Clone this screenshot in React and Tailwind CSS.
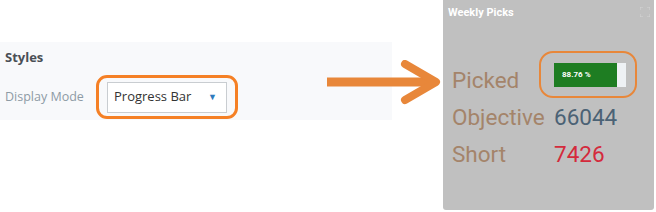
export default function App() {
    return (
        <div className="relative w-[656px] h-[212px] bg-white overflow-hidden" style={{ fontFamily: "'Open Sans', sans-serif" }}>
            <div className="absolute left-0 top-[42px] w-[392px] h-[78px] bg-[#f8f9fb]">
                <div className="pl-[5px] pt-[6px] text-[13px] font-bold text-[#4a4f55]">Styles</div>
                <div className="flex items-center mt-[14px]">
                    <span className="pl-[5px] w-[107px] text-[12.5px] text-[#8e9ba5]">Display Mode</span>
                    <div className="relative">
                        <div className="flex items-center justify-between w-[120px] h-[31px] bg-white border border-[#c9cdd1] pl-[6px] pr-[9px] text-[13px] text-[#333]">
                            <span>Progress Bar</span>
                            <span className="text-[9px] text-[#2f7bbd]">▼</span>
                        </div>
                        <div className="absolute -left-[11px] -top-[7px] w-[142px] h-[44px] border-[3px] border-[#f58025] rounded-[11px]"></div>
                    </div>
                </div>
            </div>

            <svg className="absolute left-[325px] top-[60px]" width="118" height="46" viewBox="0 0 118 46">
                <line x1="2" y1="22" x2="108" y2="22" stroke="#e8873a" strokeWidth="9" />
                <polyline points="80,4 111,22 80,40" fill="none" stroke="#e8873a" strokeWidth="8" strokeLinecap="round" strokeLinejoin="round" />
            </svg>

            <div className="absolute left-[443px] top-0 w-[211px] h-[210px] bg-[#c0c0c0] rounded-b-[3px]" style={{ fontFamily: "Roboto, sans-serif" }}>
                <div className="flex justify-between items-start pl-[5px] pr-[4px] pt-[5px]">
                    <span className="text-[11px] font-bold text-white">Weekly Picks</span>
                    <svg width="10" height="10" viewBox="0 0 10 10" className="mt-[2px]">
                        <path d="M0 3V0H3M7 0H10V3M10 7V10H7M3 10H0V7" fill="none" stroke="#d4d4d4" strokeWidth="1" />
                    </svg>
                </div>
                <div className="grid grid-cols-[102px_1fr] pl-[9px] mt-[45px] gap-y-[10px] text-[22.5px] leading-[27px]">
                    <span className="text-[#a4846a]">Picked</span>
                    <div className="relative -mt-[4px] self-start">
                        <div className="flex w-[72px] h-[24px] bg-[#eef1f4]">
                            <div className="w-[63px] h-full bg-[#1e7d22] flex items-center pl-[8px] text-[8px] font-bold text-white">88.76 %</div>
                        </div>
                        <div className="absolute -left-[15px] -top-[12px] w-[98px] h-[47px] border-2 border-[#e8873a] rounded-[14px]"></div>
                    </div>
                    <span className="text-[#a4846a]">Objective</span>
                    <span className="text-[#4b6275]">66044</span>
                    <span className="text-[#a4846a]">Short</span>
                    <span className="text-[#d42a3c]">7426</span>
                </div>
            </div>
        </div>
    );
}
